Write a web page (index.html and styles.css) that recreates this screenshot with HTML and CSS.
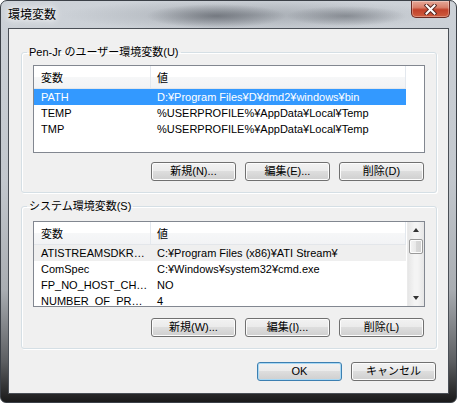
FILE: index.html
```html
<!DOCTYPE html>
<html lang="ja">
<head>
    <meta charset="UTF-8">
    <title>環境変数</title>
    <link rel="stylesheet" href="styles.css">
</head>
<body>
    <!-- Dialog Window -->
    <div class="window">
        <div class="titlebar">
            <span class="title">環境変数</span>
            <button class="close" aria-label="閉じる">
                <svg width="13" height="11" viewBox="0 0 13 11">
                    <path d="M2.5 1.5 L10.5 9.5 M10.5 1.5 L2.5 9.5" stroke="#5a2a24" stroke-width="4" stroke-linecap="square"/>
                    <path d="M2.5 1.5 L10.5 9.5 M10.5 1.5 L2.5 9.5" stroke="#fff" stroke-width="2" stroke-linecap="square"/>
                </svg>
            </button>
        </div>

        <div class="client">
            <!-- User variables -->
            <fieldset class="group group-user">
                <legend>Pen-Jr のユーザー環境変数(U)</legend>
                <div class="list list-user">
                    <div class="list-body">
                        <div class="list-head">
                            <span class="col-name">変数</span>
                            <span class="col-value">値</span>
                        </div>
                        <div class="row selected">
                            <span class="col-name">PATH</span>
                            <span class="col-value">D:¥Program Files¥D¥dmd2¥windows¥bin</span>
                        </div>
                        <div class="row">
                            <span class="col-name">TEMP</span>
                            <span class="col-value">%USERPROFILE%¥AppData¥Local¥Temp</span>
                        </div>
                        <div class="row">
                            <span class="col-name">TMP</span>
                            <span class="col-value">%USERPROFILE%¥AppData¥Local¥Temp</span>
                        </div>
                    </div>
                </div>
                <div class="actions">
                    <button class="btn">新規(N)...</button>
                    <button class="btn">編集(E)...</button>
                    <button class="btn">削除(D)</button>
                </div>
            </fieldset>

            <!-- System variables -->
            <fieldset class="group group-system">
                <legend>システム環境変数(S)</legend>
                <div class="list list-system">
                    <div class="list-body">
                        <div class="list-head">
                            <span class="col-name">変数</span>
                            <span class="col-value">値</span>
                        </div>
                        <div class="row inactive">
                            <span class="col-name">ATISTREAMSDKROOT</span>
                            <span class="col-value">C:¥Program Files (x86)¥ATI Stream¥</span>
                        </div>
                        <div class="row">
                            <span class="col-name">ComSpec</span>
                            <span class="col-value">C:¥Windows¥system32¥cmd.exe</span>
                        </div>
                        <div class="row">
                            <span class="col-name">FP_NO_HOST_CHECK</span>
                            <span class="col-value">NO</span>
                        </div>
                        <div class="row">
                            <span class="col-name">NUMBER_OF_PROCESSORS</span>
                            <span class="col-value">4</span>
                        </div>
                    </div>
                    <div class="scrollbar">
                        <div class="arrow arrow-up"></div>
                        <div class="track"><div class="thumb"></div></div>
                        <div class="arrow arrow-down"></div>
                    </div>
                </div>
                <div class="actions">
                    <button class="btn">新規(W)...</button>
                    <button class="btn">編集(I)...</button>
                    <button class="btn">削除(L)</button>
                </div>
            </fieldset>

            <!-- Dialog buttons -->
            <div class="dialog-actions">
                <button class="btn default">OK</button>
                <button class="btn">キャンセル</button>
            </div>
        </div>
    </div>
</body>
</html>
```

FILE: styles.css
```css
/* Basic Styling */
* {
    box-sizing: border-box;
}

body {
    margin: 0;
    background: #fff;
    font-family: "Liberation Sans", "Noto Sans CJK JP", sans-serif;
    font-size: 11px;
    color: #000;
}

/* Window Frame */
.window {
    width: 457px;
    height: 403px;
    border: 1px solid #3b4047;
    border-radius: 7px 7px 6px 6px;
    overflow: hidden;
    display: flex;
    flex-direction: column;
    background:
        radial-gradient(ellipse 70px 12px at 215px 15px, rgba(60, 64, 72, 0.5), transparent),
        radial-gradient(ellipse 60px 10px at 345px 15px, rgba(60, 64, 72, 0.4), transparent),
        radial-gradient(ellipse 190px 16px at 250px 14px, rgba(110, 116, 124, 0.4), transparent),
        linear-gradient(to bottom, #cdd2d8 0, #c2c7cd 45%, #a9adb2 72%, #5c5e61 90%, #1a1a1a 100%);
}

.titlebar {
    height: 27px;
    display: flex;
    align-items: flex-start;
    flex-shrink: 0;
}

.title {
    padding: 5px 0 0 7px;
    font-family: "Noto Sans CJK JP", sans-serif;
    font-size: 12px;
    line-height: 15px;
    text-shadow: 0 0 6px #fff, 0 0 10px #fff;
}

.close {
    margin-left: auto;
    margin-right: 6px;
    width: 39px;
    height: 17px;
    padding: 0;
    border: 1px solid #6b2a22;
    border-top: none;
    border-radius: 0 0 5px 5px;
    background: linear-gradient(to bottom, #e6a898 0, #d9806b 40%, #c2412a 55%, #cf5d3f 100%);
    box-shadow: inset 0 0 0 1px rgba(255, 255, 255, 0.3);
    display: flex;
    align-items: center;
    justify-content: center;
}

/* Client Area */
.client {
    margin: 0 7px;
    height: 366px;
    flex-shrink: 0;
    background: #f0f0f0;
    border: 1px solid #4a4f56;
    display: flex;
    flex-direction: column;
}

/* Group Boxes */
.group {
    width: 416px;
    min-width: 0;
    margin: 16px 0 0 12px;
    padding: 0 0 11px 0;
    border: 1px solid #d5dfe5;
    border-radius: 3px;
    box-shadow: inset 1px 1px 0 #fff, 1px 1px 0 #fff;
}

.group-system {
    margin-top: 6px;
}

legend {
    margin-left: 5px;
    padding: 0 2px;
    line-height: 14px;
}

/* List Views */
.list {
    width: 392px;
    margin: 6px 0 0 11px;
    border: 1px solid #828790;
    background: #fff;
    display: flex;
    overflow: hidden;
}

.list-user {
    height: 88px;
}

.list-system {
    height: 86px;
    margin-top: 8px;
}

.list-body {
    flex: 1;
    overflow: hidden;
}

.list-head,
.row {
    display: flex;
    width: 372px;
}

.list-head {
    height: 23px;
    align-items: center;
    background: linear-gradient(to bottom, #fff 0, #fff 50%, #f6f7f8 51%, #f2f3f5 100%);
    border-bottom: 1px solid #e3e6ea;
}

.list-head .col-name,
.list-head .col-value {
    border-right: 1px solid #e3e8ee;
    height: 100%;
    display: flex;
    align-items: center;
}

.row {
    height: 16px;
    line-height: 16px;
}

.col-name {
    width: 117px;
    padding-left: 7px;
    white-space: nowrap;
    overflow: hidden;
    text-overflow: ellipsis;
}

.col-value {
    width: 255px;
    padding-left: 6px;
    white-space: nowrap;
    overflow: hidden;
}

.row.selected {
    background: #3399ff;
    color: #fff;
}

.row.inactive {
    background: #efefef;
}

/* Scrollbar */
.scrollbar {
    width: 17px;
    display: flex;
    flex-direction: column;
    background: linear-gradient(to right, #e6e6e6, #f4f4f4 40%, #f4f4f4 60%, #e6e6e6);
    border-left: 1px solid #eaeaea;
}

.arrow {
    height: 17px;
    position: relative;
}

.arrow::after {
    content: '';
    position: absolute;
    left: 5px;
    border-left: 3.5px solid transparent;
    border-right: 3.5px solid transparent;
}

.arrow-up::after {
    top: 6px;
    border-bottom: 4px solid #333;
}

.arrow-down::after {
    top: 7px;
    border-top: 4px solid #333;
}

.track {
    flex: 1;
}

.thumb {
    width: 14px;
    height: 15px;
    margin-left: 1px;
    border: 1px solid #9a9a9a;
    border-radius: 2px;
    background: linear-gradient(to right, #f3f3f3, #e8e8e8 50%, #d8d8d8 51%, #d2d2d2);
    box-shadow: inset 0 0 0 1px #fcfcfc;
}

/* Buttons */
.actions,
.dialog-actions {
    display: flex;
    justify-content: flex-end;
    gap: 9px;
}

.actions {
    margin: 9px 12px 0 0;
}

.group-system .actions {
    margin-top: 11px;
}

.dialog-actions {
    margin: 13px 12px 0 0;
}

.btn {
    width: 85px;
    height: 19px;
    padding: 0;
    font: inherit;
    line-height: 17px;
    color: #000;
    border: 1px solid #707070;
    border-radius: 3px;
    background: linear-gradient(to bottom, #f2f2f2 0, #ebebeb 45%, #dddddd 50%, #cfcfcf 100%);
    box-shadow: inset 0 0 0 1px #fcfcfc;
}

.btn.default {
    border-color: #3c7fb1;
    box-shadow: inset 0 0 0 1px #a8d8f4;
}
```
